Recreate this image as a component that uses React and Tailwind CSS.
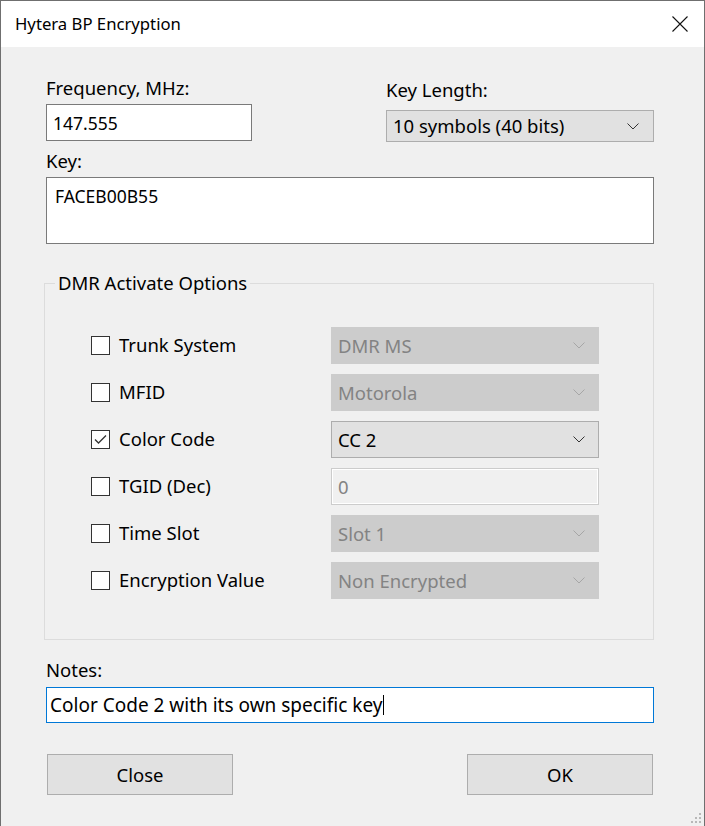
import React from 'react';

const Chevron = ({ disabled }) => (
  <svg width="12" height="7" viewBox="0 0 12 7" className="shrink-0">
    <path d="M0.5 0.5 L6 6 L11.5 0.5" fill="none" stroke={disabled ? '#a6a6a6' : '#333333'} strokeWidth="1" />
  </svg>
);

const Select = ({ value, disabled }) => (
  <div
    className={`flex h-[37px] w-[268px] items-center justify-between pl-[6px] pr-[13px] border ${
      disabled ? 'bg-[#cccccc] border-[#cccccc] text-[#838383]' : 'bg-[#e1e1e1] border-[#adadad] text-black'
    }`}
  >
    <span>{value}</span>
    <Chevron disabled={disabled} />
  </div>
);

const Checkbox = ({ checked }) => (
  <div className="flex h-[19px] w-[19px] shrink-0 items-center justify-center border border-[#333333] bg-white">
    {checked && (
      <svg width="15" height="15" viewBox="0 0 15 15">
        <path d="M2 7.5 L5.5 11 L13 3.5" fill="none" stroke="#333333" strokeWidth="1.3" />
      </svg>
    )}
  </div>
);

const rows = [
  { label: 'Trunk System', value: 'DMR MS', kind: 'select', checked: false },
  { label: 'MFID', value: 'Motorola', kind: 'select', checked: false },
  { label: 'Color Code', value: 'CC 2', kind: 'select', checked: true },
  { label: 'TGID (Dec)', value: '0', kind: 'input', checked: false },
  { label: 'Time Slot', value: 'Slot 1', kind: 'select', checked: false },
  { label: 'Encryption Value', value: 'Non Encrypted', kind: 'select', checked: false },
];

const App = () => {
  return (
    <div
      className="flex h-[826px] w-[705px] flex-col overflow-hidden border-x border-t border-[#6f6f6f] text-[18.5px] leading-[22px] text-black"
      style={{ fontFamily: '"Noto Sans", "Open Sans", sans-serif' }}
    >
      {/* title bar */}
      <div className="flex h-[46px] shrink-0 items-center justify-between bg-white pl-[14px] pr-[16px]">
        <span className="text-[16.7px]">Hytera BP Encryption</span>
        <svg width="16" height="16" viewBox="0 0 16 16">
          <path d="M0.5 0.5 L15.5 15.5 M15.5 0.5 L0.5 15.5" stroke="#111" strokeWidth="1.1" />
        </svg>
      </div>

      {/* body */}
      <div className="relative flex flex-1 flex-col bg-[#f0f0f0] pl-[45px] pr-[50px]">
        <div className="flex justify-between pt-[30px]">
          <div className="flex flex-col">
            <span>Frequency, MHz:</span>
            <div className="mt-[5px] flex h-[37px] w-[206px] items-center border border-[#7a7a7a] bg-white pl-[6px] text-[17.5px]">
              147.555
            </div>
          </div>
          <div className="flex flex-col pt-[2px]">
            <span>Key Length:</span>
            <div className="mt-[9px] flex h-[32px] w-[268px] items-center justify-between border border-[#adadad] bg-[#e1e1e1] pl-[6px] pr-[14px]">
              <span>10 symbols (40 bits)</span>
              <Chevron />
            </div>
          </div>
        </div>

        <span className="mt-[8px]">Key:</span>
        <div className="mt-[5px] h-[67px] border border-[#7a7a7a] bg-white pl-[8px] pt-[7px] text-[17.5px]">FACEB00B55</div>

        <fieldset className="mt-[28px] ml-[-2px] border border-[#dcdcdc] pb-[40px] pl-[46px] pt-[33px]">
          <legend className="ml-[-36px] px-[3px]">DMR Activate Options</legend>
          <div className="flex flex-col gap-[10px]">
            {rows.map((row) => (
              <div key={row.label} className="flex items-center">
                <div className="flex w-[240px] items-center gap-[9px]">
                  <Checkbox checked={row.checked} />
                  <span className="-mt-[2px]">{row.label}</span>
                </div>
                {row.kind === 'select' ? (
                  <Select value={row.value} disabled={!row.checked} />
                ) : (
                  <div className="flex h-[37px] w-[268px] items-center border border-[#cccccc] bg-[#f0f0f0] pl-[6px] text-[#838383] shadow-[inset_0_0_0_1px_#ffffff]">
                    {row.value}
                  </div>
                )}
              </div>
            ))}
          </div>
        </fieldset>

        <span className="mt-[19px]">Notes:</span>
        <div className="mt-[6px] flex h-[36px] items-center border border-[#0078d7] bg-white pl-[3px] text-[19px]">
          <span>Color Code 2 with its own specific key</span>
          <span className="ml-[1px] h-[20px] w-px bg-black" />
        </div>

        <div className="mt-[31px] flex justify-between pl-[1px] pr-[1px]">
          <button className="h-[41px] w-[186px] border border-[#adadad] bg-[#e1e1e1]">Close</button>
          <button className="h-[41px] w-[186px] border border-[#adadad] bg-[#e1e1e1]">OK</button>
        </div>

        {/* resize grip */}
        <svg width="10" height="10" viewBox="0 0 10 10" className="absolute bottom-[3px] right-[3px]">
          <rect x="8" y="0" width="2" height="2" fill="#b8b8b8" />
          <rect x="4" y="4" width="2" height="2" fill="#b8b8b8" />
          <rect x="8" y="4" width="2" height="2" fill="#b8b8b8" />
          <rect x="0" y="8" width="2" height="2" fill="#b8b8b8" />
          <rect x="4" y="8" width="2" height="2" fill="#b8b8b8" />
          <rect x="8" y="8" width="2" height="2" fill="#b8b8b8" />
        </svg>
      </div>
    </div>
  );
};

export default App;
